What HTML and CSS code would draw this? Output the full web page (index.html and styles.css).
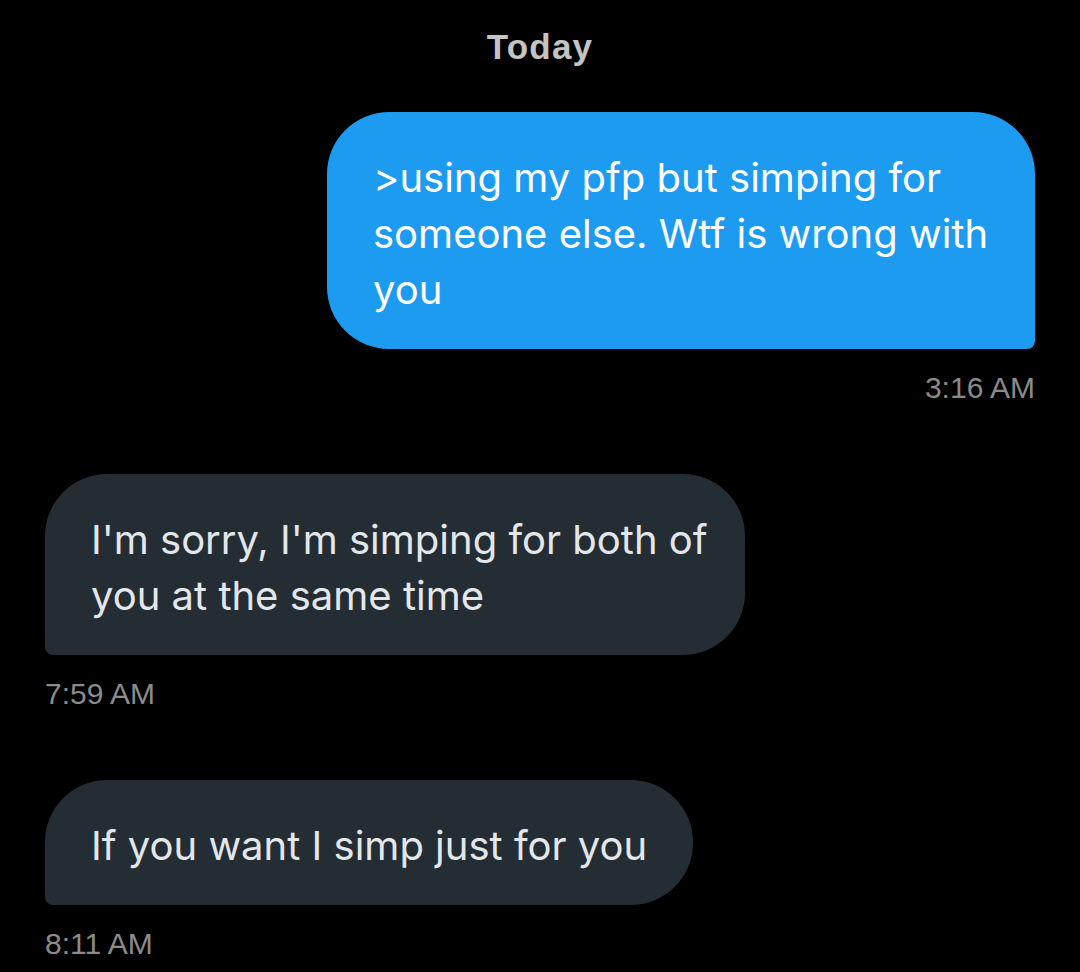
FILE: index.html
```html
<!DOCTYPE html>
<html>
<head>
<meta charset="utf-8">
<link rel="stylesheet" href="styles.css">
</head>
<body>
<div class="chat">
  <div class="day">Today</div>
  <div class="msg sent">
    <div class="bubble">&gt;using my pfp but simping for<br>someone else. Wtf is wrong with<br>you</div>
    <div class="time">3:16 AM</div>
  </div>
  <div class="msg recv">
    <div class="bubble">I'm sorry, I'm simping for both of<br>you at the same time</div>
    <div class="time">7:59 AM</div>
  </div>
  <div class="msg recv">
    <div class="bubble">If you want I simp just for you</div>
    <div class="time">8:11 AM</div>
  </div>
</div>
</body>
</html>
```
FILE: styles.css
```css
html, body { margin: 0; padding: 0; background: #000; }
body { width: 1080px; height: 972px; overflow: hidden; font-family: Inter, "Open Sans", sans-serif; }
.chat { display: flex; flex-direction: column; padding: 0 45px; }
.day { text-align: center; font-family: "Liberation Sans", Arial, sans-serif; font-weight: 700; font-size: 35px; letter-spacing: 1.2px; color: #c4c4c4; line-height: 40px; margin-top: 27px; }
.msg { display: flex; flex-direction: column; }
.sent { align-items: flex-end; margin-top: 45px; }
.recv { align-items: flex-start; }
.bubble { font-size: 40px; line-height: 56px; padding: 38px 46px 31px; border-radius: 62px; box-sizing: border-box; white-space: nowrap; }
.sent .bubble { background: #1d9bf0; color: #fff; width: 708px; border-bottom-right-radius: 8px; }
.recv .bubble { background: #242d34; color: #e4e7ea; border-bottom-left-radius: 8px; }
.recv:not(:last-child) .bubble { width: 700px; }
.time { font-family: "Liberation Sans", Arial, sans-serif; font-size: 30px; color: #8b8b8b; line-height: 34px; margin-top: 22px; }
.sent .time { margin-bottom: 69px; }
.recv + .recv { margin-top: 69px; }
```
